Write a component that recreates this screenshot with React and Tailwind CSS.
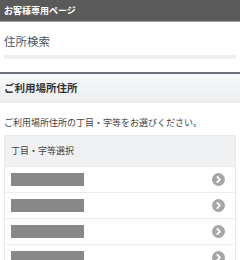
import React from "react";

const Chevron = () => (
  <svg width="13" height="13" viewBox="0 0 13 13" className="block">
    <circle cx="6.5" cy="6.5" r="6.5" fill="#a6a6a6" />
    <path d="M5.3 3.9 L7.9 6.5 L5.3 9.1" fill="none" stroke="#ffffff" strokeWidth="1.8" strokeLinecap="round" strokeLinejoin="round" />
  </svg>
);

export default function App() {
  const rows = [0, 1, 2, 3];
  return (
    <div
      className="w-[240px] h-[260px] overflow-hidden bg-white"
      style={{ fontFamily: '"Noto Sans CJK JP", "Noto Sans", sans-serif' }}
    >
      <div className="h-[22px] bg-[#5a5a5a] border-b border-[#a3a3a3] flex items-center px-[4px] text-white text-[9px] font-bold leading-none">
        お客様専用ページ
      </div>
      <div className="px-[4px] pt-[11px]">
        <div className="h-[16px] text-[11.5px] leading-[16px] text-[#4d5361]">住所検索</div>
        <div className="mt-[6px] h-[4px] bg-[#efefef]"></div>
      </div>
      <div className="mt-[13px] border-t-2 border-[#6b717b] h-[31px] bg-gradient-to-b from-[#f8f9fa] to-[#eceef0] border-b border-b-[#e6e8ea] flex items-center px-[4px]">
        <span className="text-[10.5px] font-bold text-[#333] leading-none">ご利用場所住所</span>
      </div>
      <div className="px-[4px]">
        <div className="mt-[12px] h-[16px] text-[9px] leading-[16px] text-[#444]">
          ご利用場所住所の丁目・字等をお選びください。
        </div>
        <div className="mt-[4px] border border-[#e9e9e9]">
          <div className="h-[31px] bg-[#f0f1f3] flex items-center px-[6px] text-[9px] text-[#444] border-b border-[#e9e9e9]">
            丁目・字等選択
          </div>
          {rows.map((r) => (
            <div key={r} className="h-[26px] flex items-center justify-between pl-[6px] pr-[10px] border-b border-[#ececec]">
              <div className="w-[73px] h-[13px] bg-[#888888]"></div>
              <Chevron />
            </div>
          ))}
        </div>
      </div>
    </div>
  );
}
